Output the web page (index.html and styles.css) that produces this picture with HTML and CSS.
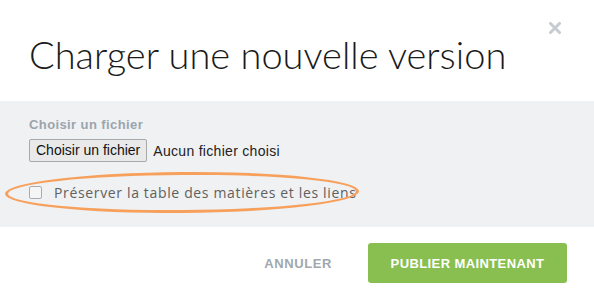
FILE: index.html
```html
<!DOCTYPE html>
<html lang="fr">
<head>
  <meta charset="UTF-8">
  <meta name="viewport" content="width=device-width, initial-scale=1.0">
  <title>Charger une nouvelle version</title>
  <link rel="stylesheet" href="styles.css">
</head>
<body>
  <div class="modal">
    <div class="modal-header">
      <h1>Charger une nouvelle version</h1>
      <button class="close" aria-label="Fermer">
        <svg width="12" height="12" viewBox="0 0 12 12">
          <path d="M1.5 1.5 L10.5 10.5 M10.5 1.5 L1.5 10.5" stroke="#c6ccd1" stroke-width="3" stroke-linecap="square"/>
        </svg>
      </button>
    </div>

    <div class="modal-body">
      <label class="field-label">Choisir un fichier</label>
      <div class="file-row">
        <span class="file-btn">Choisir un fichier</span>
        <span class="file-name">Aucun fichier choisi</span>
      </div>
      <div class="check-row">
        <span class="checkbox"></span>
        <span class="check-label">Préserver la table des matières et les liens</span>
        <span class="highlight"></span>
      </div>
    </div>

    <div class="modal-footer">
      <button class="btn btn-link">Annuler</button>
      <button class="btn btn-primary">Publier maintenant</button>
    </div>
  </div>
</body>
</html>
```

FILE: styles.css
```css
* {
  margin: 0;
  padding: 0;
  box-sizing: border-box;
}

body {
  font-family: "Liberation Sans", Arial, sans-serif;
  background: white;
  color: #333;
  width: 594px;
  height: 296px;
  overflow: hidden;
}

.modal-header {
  height: 101px;
  display: flex;
  align-items: flex-start;
  justify-content: space-between;
  padding: 0 33px 0 29px;
}

h1 {
  font-family: Lato, sans-serif;
  font-weight: 300;
  font-size: 38px;
  color: #1a1a1a;
  margin-top: 31px;
}

.close {
  background: none;
  border: none;
  margin-top: 22px;
  cursor: pointer;
}

.modal-body {
  background: #f0f1f3;
  height: 126px;
  padding: 16px 29px 0;
}

.field-label {
  display: block;
  font-weight: 700;
  font-size: 13px;
  letter-spacing: 0.4px;
  color: #9aa5ad;
  margin-bottom: 7px;
}

.file-row {
  display: flex;
  align-items: center;
  gap: 6px;
  font-size: 14px;
}

.file-btn {
  display: inline-block;
  background: #e9e9e9;
  border: 1px solid #a9a9a9;
  border-radius: 2px;
  padding: 2px 6px;
  color: #111;
  height: 23px;
}

.file-name {
  color: #222;
  letter-spacing: 0.3px;
}

.check-row {
  position: relative;
  display: flex;
  align-items: center;
  gap: 12px;
  margin-top: 21px;
}

.checkbox {
  width: 13px;
  height: 13px;
  border: 1px solid #a8acb0;
  border-radius: 2px;
  background: #f5f5f5;
}

.check-label {
  font-family: "Open Sans", sans-serif;
  font-size: 14px;
  letter-spacing: 0.65px;
  color: #606060;
}

.highlight {
  position: absolute;
  left: -24px;
  top: -11px;
  width: 354px;
  height: 41px;
  border: 3px solid #f7a05c;
  border-radius: 50%;
  transform: rotate(-0.4deg);
}

.modal-footer {
  display: flex;
  justify-content: flex-end;
  align-items: center;
  gap: 36px;
  padding: 16px 27px 0 0;
}

.btn {
  font-weight: 700;
  font-size: 13px;
  text-transform: uppercase;
  border: none;
  cursor: pointer;
}

.btn-link {
  background: none;
  color: #a0a8ae;
  letter-spacing: 0.6px;
}

.btn-primary {
  background: #88bf50;
  color: white;
  width: 199px;
  height: 40px;
  border-radius: 3px;
  letter-spacing: 0.4px;
}
```
